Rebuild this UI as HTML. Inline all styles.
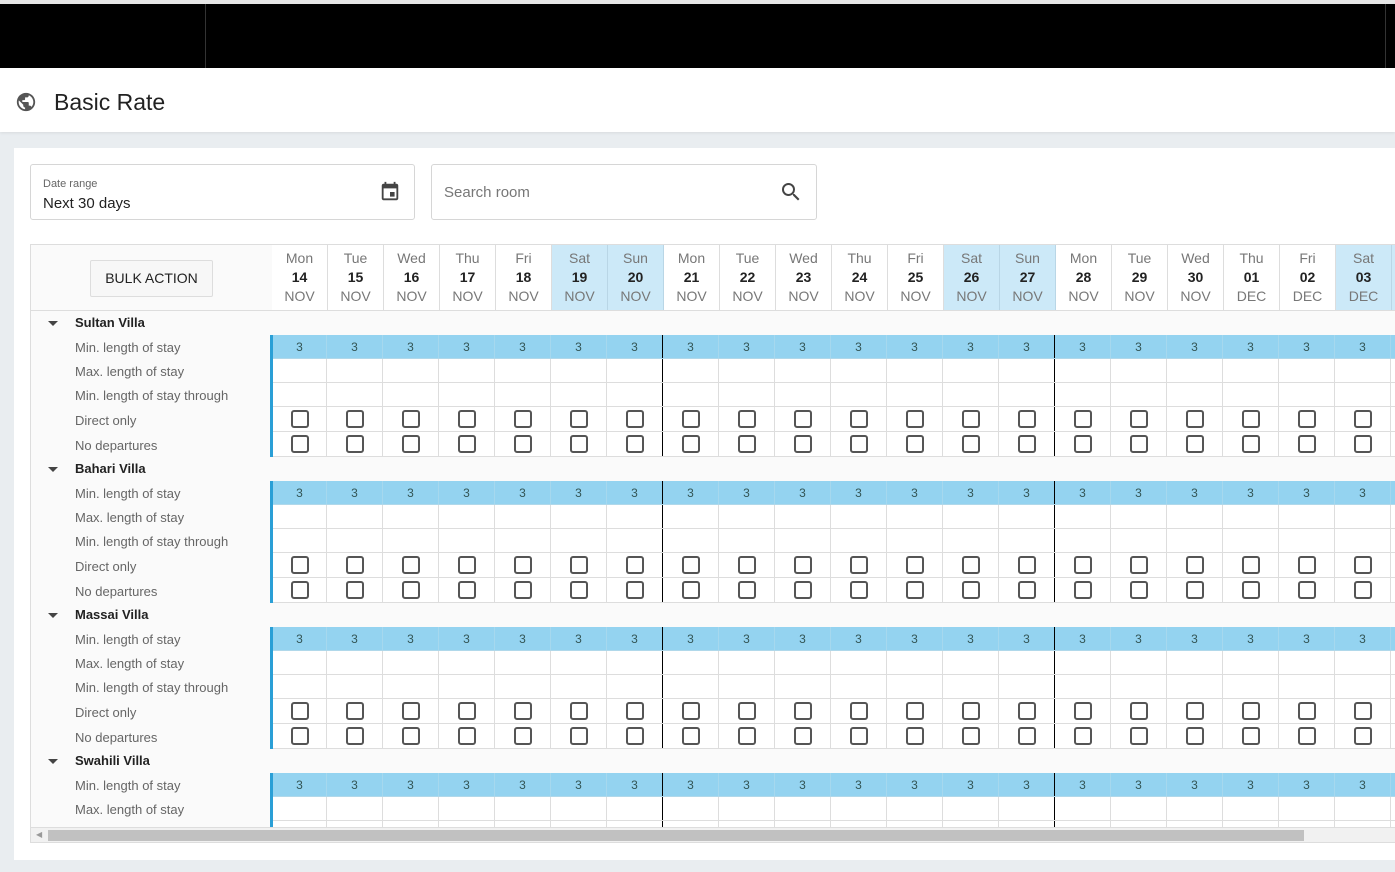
<!DOCTYPE html>
<html><head><meta charset="utf-8"><style>
*{box-sizing:border-box;margin:0;padding:0}
body{width:1395px;height:872px;overflow:hidden;background:#e9edf0;font-family:"Liberation Sans",sans-serif;position:relative}
.top{position:absolute;left:0;top:0;width:1395px;height:4px;background:#e6e6e6}
.blk{position:absolute;left:0;top:4px;width:1395px;height:64px;background:#000}
.blk i{position:absolute;left:205px;top:0;width:1px;height:64px;background:#333}
.blk b{position:absolute;left:1385px;top:0;width:1px;height:64px;background:#333}
.hdr{position:absolute;left:0;top:68px;width:1395px;height:64px;background:#fff;box-shadow:0 1px 3px rgba(0,0,0,.08)}
.hdr h1{position:absolute;left:54px;top:21px;font-size:23px;font-weight:normal;color:#222}
.hdr svg{position:absolute;left:15px;top:23px}
.card{position:absolute;left:14px;top:148px;width:1381px;height:712px;background:#fff}
.fld{position:absolute;border:1px solid #d6d6d6;border-radius:3px;background:#fff}
.tbl{position:absolute;left:30px;top:244px;width:1365px;height:599px;border:1px solid #ddd;border-right:none;overflow:hidden;background:#fafafa}
.hrow{position:absolute;left:0;top:0;height:66px;width:1400px;border-bottom:1px solid #ddd;background:#fafafa}
.dh{position:absolute;top:0;width:56px;height:65px;border-right:1px solid #ddd;background:#fff;text-align:center;font-size:14px;color:#777;line-height:19px;padding-top:4px}
.dh b{display:block;color:#222}
.we{background:#cce9f8;border-right-color:#b9d6e6}
.btn{position:absolute;left:59px;top:15px;width:123px;height:37px;border:1px solid #ddd;border-radius:2px;font-size:14px;color:#222;text-align:center;line-height:35px;background:#f7f7f7}
.g{position:absolute;left:0;width:1400px;height:146px}
.nm{position:absolute;left:44px;top:0;height:24px;line-height:24px;font-size:13px;font-weight:bold;color:#222}
.tri{position:absolute;left:17px;top:10px;width:0;height:0;border-left:5px solid transparent;border-right:5px solid transparent;border-top:5px solid #444}
.lb{position:absolute;left:44px;font-size:13px;color:#666}
.cells{position:absolute;left:239px;top:24px;width:1200px;height:122px;border-left:3px solid #2a9fd6}
.r{display:flex;height:24px;border-bottom:1px solid #ddd;background:#fff}
.r.t{height:25px}
.r div{width:56px;flex:none;border-right:1px solid #ddd;text-align:center;font-size:12px;color:#355;line-height:24px}
.r div:first-child{width:54px}
.r.bl{background:#94d3f0;border-bottom-color:#b0d8ea}
.r.bl div{border-right-color:#a6d8ee}
.r div:nth-child(7),.r div:nth-child(14){border-right:1px solid #000}
.r.t div{padding-top:3px}
.r.t div span{display:inline-block;width:18px;height:18px;border:2px solid #555;border-radius:3px;vertical-align:top}
.sb{position:absolute;left:0;top:582px;width:1365px;height:16px;background:#f1f1f1;border-top:1px solid #ddd}
.sb i{position:absolute;left:17px;top:2px;width:1256px;height:11px;background:#c1c1c1}
</style></head><body>
<div class="top"></div>
<div class="blk"><i></i><b></b></div>
<div class="hdr"><svg width="22" height="22" viewBox="0 0 24 24"><path fill="#555" d="M12 2C6.48 2 2 6.48 2 12s4.48 10 10 10 10-4.48 10-10S17.520 2 12 2zm-1 17.93c-3.95-.49-7-3.850-7-7.93 0-.62.08-1.21.21-1.79L9 15v1c0 1.1.9 2 2 2v1.93zm6.9-2.54c-.26-.81-1-1.39-1.9-1.39h-1v-3c0-.55-.45-1-1-1H8v-2h2c.55 0 1-.45 1-1V7h2c1.1 0 2-.9 2-2v-.41c2.93 1.19 5 4.06 5 7.41 0 2.08-.8 3.97-2.1 5.39z"/></svg><h1>Basic Rate</h1></div>
<div class="card"></div>
<div class="fld" style="left:30px;top:164px;width:385px;height:56px"><div style="position:absolute;left:12px;top:13px;font-size:11px;color:#666">Date range</div><div style="position:absolute;left:12px;top:30px;font-size:15px;color:#222">Next 30 days</div><svg style="position:absolute;left:348px;top:16px" width="22" height="22" viewBox="0 0 24 24"><path fill="#444" d="M17 12h-5v5h5v-5zM16 1v2H8V1H6v2H5c-1.11 0-2 .9-2 2v14c0 1.1.89 2 2 2h14c1.1 0 2-.9 2-2V5c0-1.1-.9-2-2-2h-1V1h-2zm3 18H5V8h14v11z"/></svg></div>
<div class="fld" style="left:431px;top:164px;width:386px;height:56px"><div style="position:absolute;left:12px;top:19px;font-size:15px;color:#777">Search room</div><svg style="position:absolute;left:347px;top:15px" width="24" height="24" viewBox="0 0 24 24"><path fill="#444" d="M15.5 14h-.79l-.28-.27A6.47 6.47 0 0 0 16 9.5 6.5 6.5 0 1 0 9.5 16c1.61 0 3.09-.59 4.23-1.57l.27.28v.79l5 4.99L20.49 19l-4.99-5zm-6 0C7.01 14 5 11.99 5 9.5S7.01 5 9.5 5 14 7.01 14 9.5 11.99 14 9.5 14z"/></svg></div>
<div class="tbl">
<div class="hrow">
<div class="btn">BULK ACTION</div>
<div class="dh" style="left:241px">Mon<b>14</b>NOV</div>
<div class="dh" style="left:297px">Tue<b>15</b>NOV</div>
<div class="dh" style="left:353px">Wed<b>16</b>NOV</div>
<div class="dh" style="left:409px">Thu<b>17</b>NOV</div>
<div class="dh" style="left:465px">Fri<b>18</b>NOV</div>
<div class="dh we" style="left:521px">Sat<b>19</b>NOV</div>
<div class="dh we" style="left:577px">Sun<b>20</b>NOV</div>
<div class="dh" style="left:633px">Mon<b>21</b>NOV</div>
<div class="dh" style="left:689px">Tue<b>22</b>NOV</div>
<div class="dh" style="left:745px">Wed<b>23</b>NOV</div>
<div class="dh" style="left:801px">Thu<b>24</b>NOV</div>
<div class="dh" style="left:857px">Fri<b>25</b>NOV</div>
<div class="dh we" style="left:913px">Sat<b>26</b>NOV</div>
<div class="dh we" style="left:969px">Sun<b>27</b>NOV</div>
<div class="dh" style="left:1025px">Mon<b>28</b>NOV</div>
<div class="dh" style="left:1081px">Tue<b>29</b>NOV</div>
<div class="dh" style="left:1137px">Wed<b>30</b>NOV</div>
<div class="dh" style="left:1193px">Thu<b>01</b>DEC</div>
<div class="dh" style="left:1249px">Fri<b>02</b>DEC</div>
<div class="dh we" style="left:1305px">Sat<b>03</b>DEC</div>
<div class="dh we" style="left:1361px">Sun<b>04</b>DEC</div>
</div>

<div class="g" style="top:66px">
<div class="tri"></div><div class="nm">Sultan Villa</div>
<div class="lb" style="top:29px">Min. length of stay</div><div class="lb" style="top:53px">Max. length of stay</div><div class="lb" style="top:77px">Min. length of stay through</div><div class="lb" style="top:102px">Direct only</div><div class="lb" style="top:127px">No departures</div>
<div class="cells">
<div class="r bl"><div>3</div><div>3</div><div>3</div><div>3</div><div>3</div><div>3</div><div>3</div><div>3</div><div>3</div><div>3</div><div>3</div><div>3</div><div>3</div><div>3</div><div>3</div><div>3</div><div>3</div><div>3</div><div>3</div><div>3</div><div>3</div></div>
<div class="r"><div></div><div></div><div></div><div></div><div></div><div></div><div></div><div></div><div></div><div></div><div></div><div></div><div></div><div></div><div></div><div></div><div></div><div></div><div></div><div></div><div></div></div>
<div class="r"><div></div><div></div><div></div><div></div><div></div><div></div><div></div><div></div><div></div><div></div><div></div><div></div><div></div><div></div><div></div><div></div><div></div><div></div><div></div><div></div><div></div></div>
<div class="r t"><div><span></span></div><div><span></span></div><div><span></span></div><div><span></span></div><div><span></span></div><div><span></span></div><div><span></span></div><div><span></span></div><div><span></span></div><div><span></span></div><div><span></span></div><div><span></span></div><div><span></span></div><div><span></span></div><div><span></span></div><div><span></span></div><div><span></span></div><div><span></span></div><div><span></span></div><div><span></span></div><div><span></span></div></div>
<div class="r t"><div><span></span></div><div><span></span></div><div><span></span></div><div><span></span></div><div><span></span></div><div><span></span></div><div><span></span></div><div><span></span></div><div><span></span></div><div><span></span></div><div><span></span></div><div><span></span></div><div><span></span></div><div><span></span></div><div><span></span></div><div><span></span></div><div><span></span></div><div><span></span></div><div><span></span></div><div><span></span></div><div><span></span></div></div>
</div></div>

<div class="g" style="top:212px">
<div class="tri"></div><div class="nm">Bahari Villa</div>
<div class="lb" style="top:29px">Min. length of stay</div><div class="lb" style="top:53px">Max. length of stay</div><div class="lb" style="top:77px">Min. length of stay through</div><div class="lb" style="top:102px">Direct only</div><div class="lb" style="top:127px">No departures</div>
<div class="cells">
<div class="r bl"><div>3</div><div>3</div><div>3</div><div>3</div><div>3</div><div>3</div><div>3</div><div>3</div><div>3</div><div>3</div><div>3</div><div>3</div><div>3</div><div>3</div><div>3</div><div>3</div><div>3</div><div>3</div><div>3</div><div>3</div><div>3</div></div>
<div class="r"><div></div><div></div><div></div><div></div><div></div><div></div><div></div><div></div><div></div><div></div><div></div><div></div><div></div><div></div><div></div><div></div><div></div><div></div><div></div><div></div><div></div></div>
<div class="r"><div></div><div></div><div></div><div></div><div></div><div></div><div></div><div></div><div></div><div></div><div></div><div></div><div></div><div></div><div></div><div></div><div></div><div></div><div></div><div></div><div></div></div>
<div class="r t"><div><span></span></div><div><span></span></div><div><span></span></div><div><span></span></div><div><span></span></div><div><span></span></div><div><span></span></div><div><span></span></div><div><span></span></div><div><span></span></div><div><span></span></div><div><span></span></div><div><span></span></div><div><span></span></div><div><span></span></div><div><span></span></div><div><span></span></div><div><span></span></div><div><span></span></div><div><span></span></div><div><span></span></div></div>
<div class="r t"><div><span></span></div><div><span></span></div><div><span></span></div><div><span></span></div><div><span></span></div><div><span></span></div><div><span></span></div><div><span></span></div><div><span></span></div><div><span></span></div><div><span></span></div><div><span></span></div><div><span></span></div><div><span></span></div><div><span></span></div><div><span></span></div><div><span></span></div><div><span></span></div><div><span></span></div><div><span></span></div><div><span></span></div></div>
</div></div>

<div class="g" style="top:358px">
<div class="tri"></div><div class="nm">Massai Villa</div>
<div class="lb" style="top:29px">Min. length of stay</div><div class="lb" style="top:53px">Max. length of stay</div><div class="lb" style="top:77px">Min. length of stay through</div><div class="lb" style="top:102px">Direct only</div><div class="lb" style="top:127px">No departures</div>
<div class="cells">
<div class="r bl"><div>3</div><div>3</div><div>3</div><div>3</div><div>3</div><div>3</div><div>3</div><div>3</div><div>3</div><div>3</div><div>3</div><div>3</div><div>3</div><div>3</div><div>3</div><div>3</div><div>3</div><div>3</div><div>3</div><div>3</div><div>3</div></div>
<div class="r"><div></div><div></div><div></div><div></div><div></div><div></div><div></div><div></div><div></div><div></div><div></div><div></div><div></div><div></div><div></div><div></div><div></div><div></div><div></div><div></div><div></div></div>
<div class="r"><div></div><div></div><div></div><div></div><div></div><div></div><div></div><div></div><div></div><div></div><div></div><div></div><div></div><div></div><div></div><div></div><div></div><div></div><div></div><div></div><div></div></div>
<div class="r t"><div><span></span></div><div><span></span></div><div><span></span></div><div><span></span></div><div><span></span></div><div><span></span></div><div><span></span></div><div><span></span></div><div><span></span></div><div><span></span></div><div><span></span></div><div><span></span></div><div><span></span></div><div><span></span></div><div><span></span></div><div><span></span></div><div><span></span></div><div><span></span></div><div><span></span></div><div><span></span></div><div><span></span></div></div>
<div class="r t"><div><span></span></div><div><span></span></div><div><span></span></div><div><span></span></div><div><span></span></div><div><span></span></div><div><span></span></div><div><span></span></div><div><span></span></div><div><span></span></div><div><span></span></div><div><span></span></div><div><span></span></div><div><span></span></div><div><span></span></div><div><span></span></div><div><span></span></div><div><span></span></div><div><span></span></div><div><span></span></div><div><span></span></div></div>
</div></div>

<div class="g" style="top:504px">
<div class="tri"></div><div class="nm">Swahili Villa</div>
<div class="lb" style="top:29px">Min. length of stay</div><div class="lb" style="top:53px">Max. length of stay</div>
<div class="cells">
<div class="r bl"><div>3</div><div>3</div><div>3</div><div>3</div><div>3</div><div>3</div><div>3</div><div>3</div><div>3</div><div>3</div><div>3</div><div>3</div><div>3</div><div>3</div><div>3</div><div>3</div><div>3</div><div>3</div><div>3</div><div>3</div><div>3</div></div>
<div class="r"><div></div><div></div><div></div><div></div><div></div><div></div><div></div><div></div><div></div><div></div><div></div><div></div><div></div><div></div><div></div><div></div><div></div><div></div><div></div><div></div><div></div></div>
<div class="r"><div></div><div></div><div></div><div></div><div></div><div></div><div></div><div></div><div></div><div></div><div></div><div></div><div></div><div></div><div></div><div></div><div></div><div></div><div></div><div></div><div></div></div>
</div></div>

<div class="sb"><span style="position:absolute;left:5px;top:2px;font-size:8px;color:#999">&#9664;</span><i></i></div>
</div>
</body></html>
